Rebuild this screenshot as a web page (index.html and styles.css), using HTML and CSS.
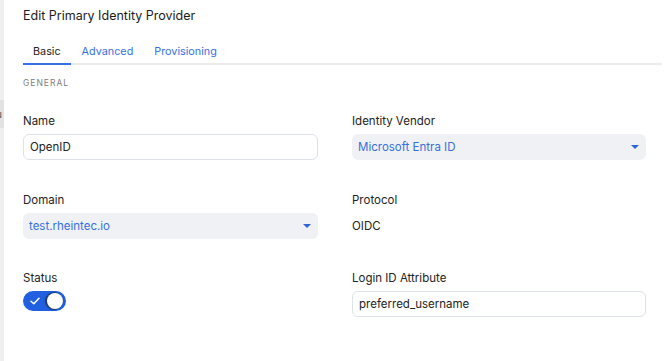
FILE: index.html
```html
<!DOCTYPE html>
<html lang="en">
  <head>
    <meta charset="UTF-8" />
    <title>Edit Primary Identity Provider</title>
    <link rel="stylesheet" href="styles.css">
  </head>
  <body>
    <div class="page">
      <div class="backdrop">
        <div class="backdrop-row">u</div>
      </div>

      <div class="dialog">
        <h2 class="title">Edit Primary Identity Provider</h2>

        <!-- Tabs -->
        <div class="tabs">
          <div class="tab active">Basic</div>
          <div class="tab">Advanced</div>
          <div class="tab">Provisioning</div>
        </div>

        <div class="section-title">GENERAL</div>

        <div class="form-grid">
          <div class="field">
            <label>Name</label>
            <div class="input">OpenID</div>
          </div>
          <div class="field">
            <label>Identity Vendor</label>
            <div class="select">
              <span>Microsoft Entra ID</span>
              <span class="caret"></span>
            </div>
          </div>

          <div class="field">
            <label>Domain</label>
            <div class="select">
              <span>test.rheintec.io</span>
              <span class="caret"></span>
            </div>
          </div>
          <div class="field">
            <label>Protocol</label>
            <div class="plain">OIDC</div>
          </div>

          <div class="field">
            <label>Status</label>
            <div class="toggle">
              <svg class="check" width="10" height="8" viewBox="0 0 10 8">
                <path d="M1 4.2 L3.8 6.8 L9 1.2" fill="none" stroke="#fff" stroke-width="1.5" stroke-linecap="round" stroke-linejoin="round" />
              </svg>
              <span class="knob"></span>
            </div>
          </div>
          <div class="field">
            <label>Login ID Attribute</label>
            <div class="input">preferred_username</div>
          </div>
        </div>
      </div>
    </div>
  </body>
</html>
```

FILE: styles.css
```css
/* General styling */
body {
  font-family: Inter, "Noto Sans", sans-serif;
  margin: 0;
  background-color: #fff;
  color: #222;
}

.page {
  display: flex;
  height: 361px;
  overflow: hidden;
}

/* Strip of the page behind the dialog */
.backdrop {
  width: 4px;
  flex-shrink: 0;
  background-color: #efefef;
  padding-top: 100px;
  overflow: hidden;
}

.backdrop-row {
  height: 28px;
  background-color: #e2e2e2;
  font-size: 10px;
  line-height: 28px;
  text-indent: -4px;
  color: #555;
}

.dialog {
  flex: 1;
  padding: 0 8px 0 19px;
}

.title {
  font-size: 12.5px;
  font-weight: 400;
  margin: 0;
  padding-top: 6px;
  line-height: 20px;
  color: #1b1b1b;
}

/* Tabs */
.tabs {
  display: flex;
  margin-top: 16px;
  border-bottom: 2px solid #ececec;
}

.tab {
  font-size: 10.8px;
  padding: 1px 10px 2px 10px;
  margin-right: 1px;
  line-height: 18px;
  color: #3570e0;
  margin-bottom: -2px;
  border-bottom: 2px solid transparent;
}

.tab.active {
  color: #222;
  border-bottom-color: #3570e0;
}

.section-title {
  font-size: 8.5px;
  letter-spacing: 1px;
  color: #7d7d7d;
  margin-top: 12px;
  line-height: 12px;
}

.form-grid {
  display: grid;
  grid-template-columns: 295px 294px;
  column-gap: 34px;
  row-gap: 17.5px;
  margin-top: 24px;
}

.field {
  height: 61px;
}

.field label {
  display: block;
  font-size: 11.5px;
  line-height: 16px;
  margin-bottom: 5px;
}

.input,
.select {
  height: 26px;
  box-sizing: border-box;
  border-radius: 6px;
  font-size: 11.5px;
  display: flex;
  align-items: center;
  padding: 0 6px;
}

.input {
  border: 1px solid #dde2ea;
  color: #222;
}

.select {
  background-color: #f0f1f4;
  color: #3570e0;
  justify-content: space-between;
  padding-right: 7px;
}

.caret {
  width: 0;
  height: 0;
  border-left: 4px solid transparent;
  border-right: 4px solid transparent;
  border-top: 4px solid #2f63d8;
}

.plain {
  font-size: 11.5px;
  line-height: 26px;
}

/* Status toggle */
.toggle {
  width: 43px;
  height: 20px;
  margin-top: 1px;
  border-radius: 10px;
  background-color: #1f5fe0;
  position: relative;
}

.check {
  position: absolute;
  left: 7px;
  top: 6px;
}

.knob {
  position: absolute;
  right: 3px;
  top: 2px;
  width: 16px;
  height: 16px;
  border-radius: 50%;
  background-color: #fff;
  box-shadow: -1px 0 1px 1px #1c3a6a;
}
```
